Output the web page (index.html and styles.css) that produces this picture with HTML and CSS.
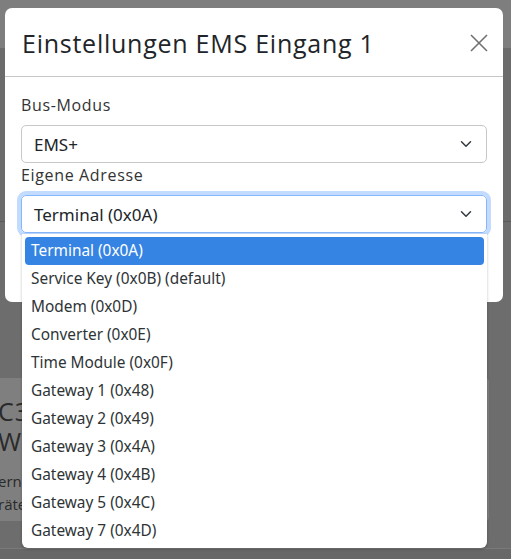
FILE: index.html
```html
<!DOCTYPE html>
<html lang="de">
<head>
<meta charset="utf-8">
<title>Einstellungen EMS Eingang 1</title>
<link rel="stylesheet" href="styles.css">
</head>
<body>
<div class="page">
  <header class="nav"></header>
  <section class="top"></section>
  <section class="mid">
    <div class="card">
      <h2 class="card-title">C3<br>W</h2>
      <p class="card-text">ern<br>räte</p>
    </div>
  </section>
  <div class="foot"></div>
</div>

<div class="modal">
  <div class="modal-header">
    <h4 class="modal-title">Einstellungen EMS Eingang 1</h4>
    <svg class="close" width="18" height="18" viewBox="0 0 18 18" aria-label="Schließen">
      <path d="M1 1 L17 17 M17 1 L1 17" stroke="#707070" stroke-width="1.6" fill="none"/>
    </svg>
  </div>
  <div class="modal-body">
    <label class="form-label">Bus-Modus</label>
    <div class="select">
      <span class="select-value">EMS+</span>
      <svg class="chev" width="16" height="12" viewBox="0 0 16 16"><path d="m2 5 6 6 6-6" fill="none" stroke="#343a40" stroke-width="2" stroke-linecap="round" stroke-linejoin="round"/></svg>
    </div>
    <label class="form-label">Eigene Adresse</label>
    <div class="select-wrap">
      <div class="select focus">
        <span class="select-value">Terminal (0x0A)</span>
        <svg class="chev" width="16" height="12" viewBox="0 0 16 16"><path d="m2 5 6 6 6-6" fill="none" stroke="#343a40" stroke-width="2" stroke-linecap="round" stroke-linejoin="round"/></svg>
      </div>
      <ul class="dropdown">
        <li class="opt active">Terminal (0x0A)</li>
        <li class="opt">Service Key (0x0B) (default)</li>
        <li class="opt">Modem (0x0D)</li>
        <li class="opt">Converter (0x0E)</li>
        <li class="opt">Time Module (0x0F)</li>
        <li class="opt">Gateway 1 (0x48)</li>
        <li class="opt">Gateway 2 (0x49)</li>
        <li class="opt">Gateway 3 (0x4A)</li>
        <li class="opt">Gateway 4 (0x4B)</li>
        <li class="opt">Gateway 5 (0x4C)</li>
        <li class="opt">Gateway 7 (0x4D)</li>
      </ul>
    </div>
  </div>
</div>
</body>
</html>
```
FILE: styles.css
```css
html, body {
  margin: 0;
  padding: 0;
}
body {
  width: 511px;
  height: 559px;
  overflow: hidden;
  background: #686868;
  font-family: "Open Sans", "Noto Sans", sans-serif;
  position: relative;
}
.page {
  display: flex;
  flex-direction: column;
}
.nav {
  height: 48px;
  background: #7e7e7e;
}
.top {
  height: 173px;
  background: #6b6b6b;
  border-bottom: 1px solid #5a5a5a;
}
.mid {
  padding: 156px 0 27px;
  background: #6d6d6d;
  border-bottom: 1px solid #7a7a7a;
}
.card {
  width: 489px;
  height: 143px;
  box-sizing: border-box;
  background: #7f7f7f;
  border-radius: 0 4px 4px 0;
  padding: 18px 0 0;
  color: #2a2a2a;
  overflow: hidden;
}
.card-title {
  margin: 0 0 0 -2px;
  font-family: "Open Sans", sans-serif;
  font-weight: 400;
  font-size: 25px;
  line-height: 30px;
  white-space: nowrap;
  letter-spacing: 1px;
}
.card-text {
  margin: 14px 0 0 -2px;
  font-size: 15px;
  line-height: 23px;
  white-space: nowrap;
}
.foot {
  flex: 1;
}

.modal {
  position: absolute;
  left: 5px;
  top: 8px;
  width: 498px;
  height: 294px;
  box-sizing: border-box;
  background: #fff;
  border-radius: 7px;
  display: flex;
  flex-direction: column;
}
.modal-header {
  height: 69px;
  box-sizing: border-box;
  border-bottom: 1px solid #c6c6c6;
  display: flex;
  align-items: center;
  justify-content: space-between;
  padding: 1px 15px 0 17px;
}
.modal-title {
  margin: 0;
  font-family: "Open Sans", sans-serif;
  font-weight: 400;
  font-size: 25px;
  color: #212529;
  letter-spacing: 0.75px;
}
.close {
  display: block;
}
.modal-body {
  padding: 16px 16px 16px;
  display: flex;
  flex-direction: column;
}
.form-label {
  font-size: 16px;
  line-height: 24px;
  color: #333;
  margin-bottom: 8px;
  font-family: "Open Sans", sans-serif;
  letter-spacing: 0.65px;
}
.select {
  height: 38px;
  box-sizing: border-box;
  border: 1px solid #c8c8c8;
  border-radius: 5px;
  display: flex;
  align-items: center;
  justify-content: space-between;
  padding: 0 12px 0 12px;
  font-family: "Noto Sans", sans-serif;
  font-size: 17px;
  color: #212529;
}
.select.focus {
  border-color: #86b7fe;
  box-shadow: 0 0 0 4px #c2dbfe;
}
.select-wrap {
  position: relative;
}
.dropdown {
  position: absolute;
  left: 1px;
  right: 0;
  top: 39px;
  margin: 0;
  padding: 3px;
  list-style: none;
  background: #fff;
  border-radius: 0 0 6px 6px;
  box-shadow: 0 1px 3px rgba(0,0,0,0.25);
  z-index: 2;
}
.opt {
  height: 28px;
  line-height: 28px;
  padding-left: 6px;
  font-family: "Noto Sans", sans-serif;
  font-size: 15.4px;
  color: #2e3436;
  border-radius: 4px;
}
.opt.active {
  background: #3584e4;
  color: #fff;
}
```
